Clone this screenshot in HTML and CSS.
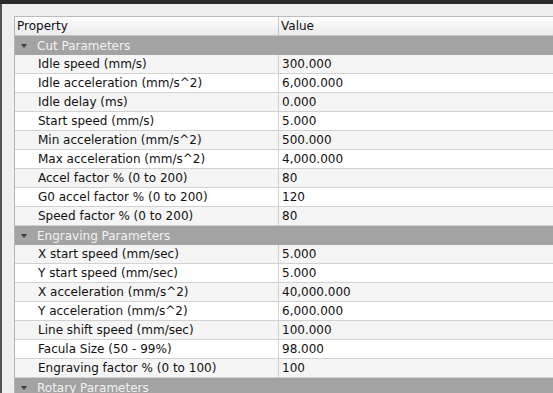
FILE: index.html
```html
<!DOCTYPE html>
<html lang="en">
<head>
    <meta charset="UTF-8">
    <title>Properties</title>
    <link rel="stylesheet" href="styles.css">
</head>
<body>
    <div class="topbar"></div>
    <div class="main">
        <div class="edge"></div>
        <div class="panel">
            <div class="tree">
                <div class="header">
                    <div class="col-name">Property</div>
                    <div class="col-value">Value</div>
                </div>

                <div class="section"><span class="arrow"></span>Cut Parameters</div>
                <div class="row"><div class="name">Idle speed (mm/s)</div><div class="value">300.000</div></div>
                <div class="row"><div class="name">Idle acceleration (mm/s^2)</div><div class="value">6,000.000</div></div>
                <div class="row"><div class="name">Idle delay (ms)</div><div class="value">0.000</div></div>
                <div class="row"><div class="name">Start speed (mm/s)</div><div class="value">5.000</div></div>
                <div class="row"><div class="name">Min acceleration (mm/s^2)</div><div class="value">500.000</div></div>
                <div class="row"><div class="name">Max acceleration (mm/s^2)</div><div class="value">4,000.000</div></div>
                <div class="row"><div class="name">Accel factor % (0 to 200)</div><div class="value">80</div></div>
                <div class="row"><div class="name">G0 accel factor % (0 to 200)</div><div class="value">120</div></div>
                <div class="row"><div class="name">Speed factor % (0 to 200)</div><div class="value">80</div></div>

                <div class="section"><span class="arrow"></span>Engraving Parameters</div>
                <div class="row"><div class="name">X start speed (mm/sec)</div><div class="value">5.000</div></div>
                <div class="row"><div class="name">Y start speed (mm/sec)</div><div class="value">5.000</div></div>
                <div class="row"><div class="name">X acceleration (mm/s^2)</div><div class="value">40,000.000</div></div>
                <div class="row"><div class="name">Y acceleration (mm/s^2)</div><div class="value">6,000.000</div></div>
                <div class="row"><div class="name">Line shift speed (mm/sec)</div><div class="value">100.000</div></div>
                <div class="row"><div class="name">Facula Size (50 - 99%)</div><div class="value">98.000</div></div>
                <div class="row"><div class="name">Engraving factor % (0 to 100)</div><div class="value">100</div></div>

                <div class="section"><span class="arrow"></span>Rotary Parameters</div>
            </div>
        </div>
    </div>
</body>
</html>
```

FILE: styles.css
```css
body {
    margin: 0;
    background-color: #efefef;
    font-family: 'DejaVu Sans', sans-serif;
    font-size: 12px;
    color: #111;
    overflow: hidden;
}

.topbar {
    height: 4px;
    background-color: #2b2b2b;
}

.main {
    display: flex;
}

.edge {
    width: 2px;
    flex-shrink: 0;
    background-color: #555;
}

.panel {
    flex: 1;
    padding: 12px 0 0 12px;
}

.tree {
    border-left: 1px solid #b4b4b4;
    border-top: 1px solid #bcbcbc;
    background-color: #fff;
}

.header {
    display: flex;
    height: 18px;
    line-height: 18px;
    background: linear-gradient(#fdfdfd, #ebebeb);
    border-bottom: 1px solid #c6c6c6;
}

.col-name {
    width: 261px;
    padding-left: 2px;
    border-right: 1px solid #c6c6c6;
}

.col-value {
    padding-left: 2px;
}

.section {
    display: flex;
    align-items: center;
    height: 19px;
    background-color: #a3a3a3;
    color: #f2f2f2;
    padding-left: 6px;
}

.arrow {
    width: 0;
    height: 0;
    border-left: 3.5px solid transparent;
    border-right: 3.5px solid transparent;
    border-top: 4px solid #3c3c3c;
    margin-right: 10px;
}

.row {
    display: flex;
    height: 18px;
    line-height: 18px;
    border-bottom: 1px solid #d2d2d2;
    background-color: #fff;
}

/* first row after each section header is the shaded one */
.row:nth-child(odd) {
    background-color: #f5f5f5;
}

.name {
    width: 240px;
    padding-left: 23px;
    border-right: 1px solid #d2d2d2;
}

.value {
    padding-left: 3px;
}
```
